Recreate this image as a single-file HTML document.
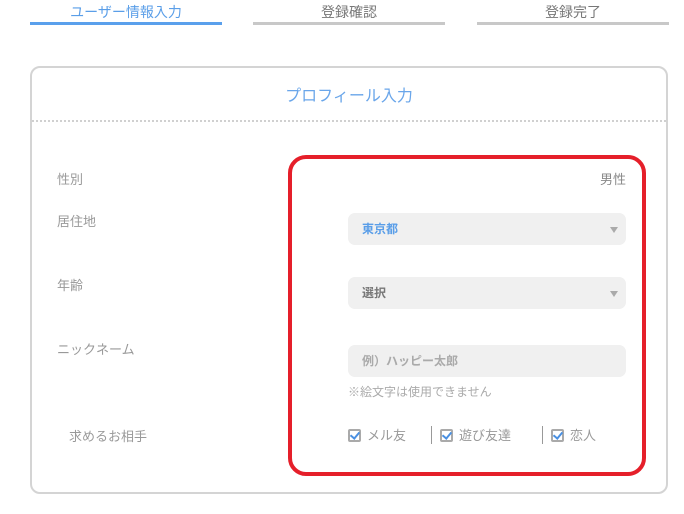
<!DOCTYPE html>
<html><head><meta charset="utf-8"><style>
*{box-sizing:border-box;margin:0;padding:0}
body{width:684px;height:514px;background:#fff;font-family:"Liberation Sans","Noto Sans CJK JP",sans-serif;position:relative;overflow:hidden;color:#888}
.a{position:absolute}
.tab{position:absolute;top:2px;width:192px;text-align:center;font-size:14px;color:#777;height:23px;border-bottom:3px solid #c8c8c8}
.card{left:30px;top:66px;width:638px;height:428px;border:2px solid #d4d4d4;border-radius:10px}
.lbl{position:absolute;left:57px;font-size:13px;color:#999}
.sel{position:absolute;left:348px;width:278px;height:32px;background:#f0f0f0;border-radius:7px;font-size:12px;font-weight:bold;padding:7px 14px}
.arr{position:absolute;right:8px;top:14px;border-left:4px solid transparent;border-right:4px solid transparent;border-top:6px solid #aaa}
.cb{display:inline-block;width:13px;height:13px;border:2px solid #aaa;border-radius:2px;vertical-align:-2px;margin-right:6px;position:relative;background:#fff}
.cb:after{content:"";position:absolute;left:2px;top:-1px;width:4px;height:7px;border:solid #4a90e2;border-width:0 2px 2px 0;transform:rotate(40deg)}
.ck{position:absolute;top:425px;font-size:13px;color:#999}
</style></head><body>
<div class="tab" style="left:30px;color:#5a9ee8;border-color:#5aa0ec">ユーザー情報入力</div>
<div class="tab" style="left:253px">登録確認</div>
<div class="tab" style="left:477px">登録完了</div>
<div class="a card"></div>
<div class="a" style="left:30px;top:82px;width:638px;text-align:center;font-size:16px;color:#6aa6ea">プロフィール入力</div>
<div class="a" style="left:32px;top:120px;width:634px;border-top:2px dotted #d0d0d0"></div>
<div class="lbl" style="top:169px">性別</div>
<div class="a" style="left:580px;top:169px;width:46px;text-align:right;font-size:13px">男性</div>
<div class="lbl" style="top:211px">居住地</div>
<div class="sel" style="top:213px;color:#5a9ee8">東京都<div class="arr"></div></div>
<div class="lbl" style="top:275px">年齢</div>
<div class="sel" style="top:277px;color:#777">選択<div class="arr"></div></div>
<div class="lbl" style="top:339px">ニックネーム</div>
<div class="sel" style="top:345px;color:#aaa">例）ハッピー太郎</div>
<div class="a" style="left:348px;top:383px;font-size:12px;color:#aaa">※絵文字は使用できません</div>
<div class="lbl" style="top:426px;left:69px">求めるお相手</div>
<div class="ck" style="left:348px"><span class="cb"></span>メル友</div>
<div class="a" style="left:431px;top:426px;height:18px;border-left:1px solid #999"></div>
<div class="ck" style="left:440px"><span class="cb"></span>遊び友達</div>
<div class="a" style="left:542px;top:426px;height:18px;border-left:1px solid #999"></div>
<div class="ck" style="left:551px"><span class="cb"></span>恋人</div>
<div class="a" style="left:288px;top:155px;width:358px;height:321px;border:4px solid #e51f2a;border-radius:18px"></div>
</body></html>
